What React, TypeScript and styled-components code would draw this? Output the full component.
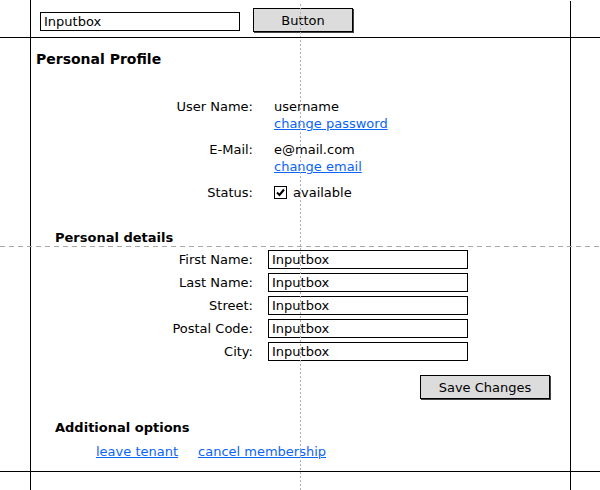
import React from "react";
import styled, { createGlobalStyle } from "styled-components";

const GlobalStyle = createGlobalStyle`
  html, body {
    margin: 0;
    padding: 0;
    background: #fff;
  }
  body {
    font-family: "DejaVu Sans", Verdana, sans-serif;
    font-size: 13px;
    color: #000;
  }
`;

const Page = styled.div`
  position: relative;
  width: 600px;
  height: 490px;
  overflow: hidden;
`;

const TopBar = styled.div`
  display: flex;
  align-items: flex-start;
  height: 37px;
  padding-left: 40px;
  box-sizing: border-box;
`;

const TextInput = styled.input<{ w?: number }>`
  box-sizing: border-box;
  width: ${({ w }) => w ?? 200}px;
  height: 19px;
  margin: 0;
  padding: 0 3px;
  border: 1px solid #000;
  border-radius: 0;
  outline: none;
  font-family: "DejaVu Sans", Verdana, sans-serif;
  font-size: 13px;
  color: #000;
  background: #fff;
`;

const TopInput = styled(TextInput)`
  margin-top: 12px;
`;

const Button = styled.button<{ w: number }>`
  box-sizing: border-box;
  width: ${({ w }) => w}px;
  height: 24px;
  padding: 0;
  border: 1px solid #000;
  border-radius: 0;
  background: #dcdcdc;
  box-shadow: 1px 1px 0 #444;
  font-family: "DejaVu Sans", Verdana, sans-serif;
  font-size: 13px;
  color: #000;
`;

const TopButton = styled(Button)`
  margin-top: 8px;
  margin-left: 13px;
`;

const Title = styled.h1`
  margin: 14px 0 0 36px;
  font-size: 14px;
  line-height: 17px;
  font-weight: bold;
`;

const SubTitle = styled.h2<{ top: number }>`
  margin: ${({ top }) => top}px 0 0 55px;
  font-size: 13px;
  line-height: 17px;
  font-weight: bold;
`;

const InfoGrid = styled.div`
  display: grid;
  grid-template-columns: 253px auto;
  column-gap: 21px;
  row-gap: 9px;
  margin-top: 30px;
  line-height: 17px;
`;

const Label = styled.div`
  text-align: right;
`;

const Value = styled.div`
  display: flex;
  flex-direction: column;
`;

const Link = styled.a`
  color: #0a64f5;
  text-decoration: underline;
  cursor: pointer;
`;

const CheckRow = styled.div`
  display: flex;
  align-items: center;
  gap: 6px;
`;

const Form = styled.div`
  display: grid;
  grid-template-columns: 253px auto;
  column-gap: 15px;
  row-gap: 4px;
  margin-top: 4px;
  align-items: center;
`;

const FormLabel = styled.label`
  text-align: right;
  line-height: 19px;
`;

const SaveRow = styled.div`
  display: flex;
  padding-left: 420px;
  margin-top: 14px;
`;

const LinkRow = styled.div`
  display: flex;
  gap: 20px;
  margin-top: 7px;
  padding-left: 96px;
  line-height: 17px;
`;

const Guide = styled.div<{ dir: "h" | "v"; dashed?: boolean }>`
  position: absolute;
  pointer-events: none;
  ${({ dir, dashed }) =>
    dir === "h"
      ? `height: 1px; left: 0; right: 0; background: ${
          dashed
            ? "repeating-linear-gradient(to right, #a8a8a8 0 5px, transparent 5px 9px)"
            : "#000"
        };`
      : `width: 1px; bottom: 0; background: ${
          dashed
            ? "repeating-linear-gradient(to bottom, #b0b0b0 0 2px, transparent 2px 4px)"
            : "#000"
        };`}
`;

function Checkbox() {
  return (
    <svg width="13" height="13" viewBox="0 0 13 13">
      <rect x="0.5" y="0.5" width="12" height="12" fill="#fff" stroke="#000" />
      <path d="M3 6.5 L5.5 9 L10 3.5" fill="none" stroke="#000" strokeWidth="2" />
    </svg>
  );
}

const fields = ["First Name:", "Last Name:", "Street:", "Postal Code:", "City:"];

export default function App() {
  return (
    <>
      <GlobalStyle />
      <Page>
        <TopBar>
          <TopInput w={200} defaultValue="Inputbox" />
          <TopButton w={100}>Button</TopButton>
        </TopBar>

        <Title>Personal Profile</Title>

        <InfoGrid>
          <Label>User Name:</Label>
          <Value>
            <span>username</span>
            <Link>change password</Link>
          </Value>
          <Label>E-Mail:</Label>
          <Value>
            <span>e@mail.com</span>
            <Link>change email</Link>
          </Value>
          <Label>Status:</Label>
          <CheckRow>
            <Checkbox />
            <span>available</span>
          </CheckRow>
        </InfoGrid>

        <SubTitle top={28}>Personal details</SubTitle>
        <Form>
          {fields.map((f) => (
            <React.Fragment key={f}>
              <FormLabel>{f}</FormLabel>
              <TextInput defaultValue="Inputbox" />
            </React.Fragment>
          ))}
        </Form>

        <SaveRow>
          <Button w={130}>Save Changes</Button>
        </SaveRow>

        <SubTitle top={20}>Additional options</SubTitle>
        <LinkRow>
          <Link>leave tenant</Link>
          <Link>cancel membership</Link>
        </LinkRow>

        <Guide dir="v" style={{ left: 30, top: 0 }} />
        <Guide dir="v" style={{ left: 570, top: 1 }} />
        <Guide dir="v" dashed style={{ left: 300, top: 4 }} />
        <Guide dir="h" style={{ top: 37 }} />
        <Guide dir="h" style={{ top: 471 }} />
        <Guide dir="h" dashed style={{ top: 246 }} />
      </Page>
    </>
  );
}
